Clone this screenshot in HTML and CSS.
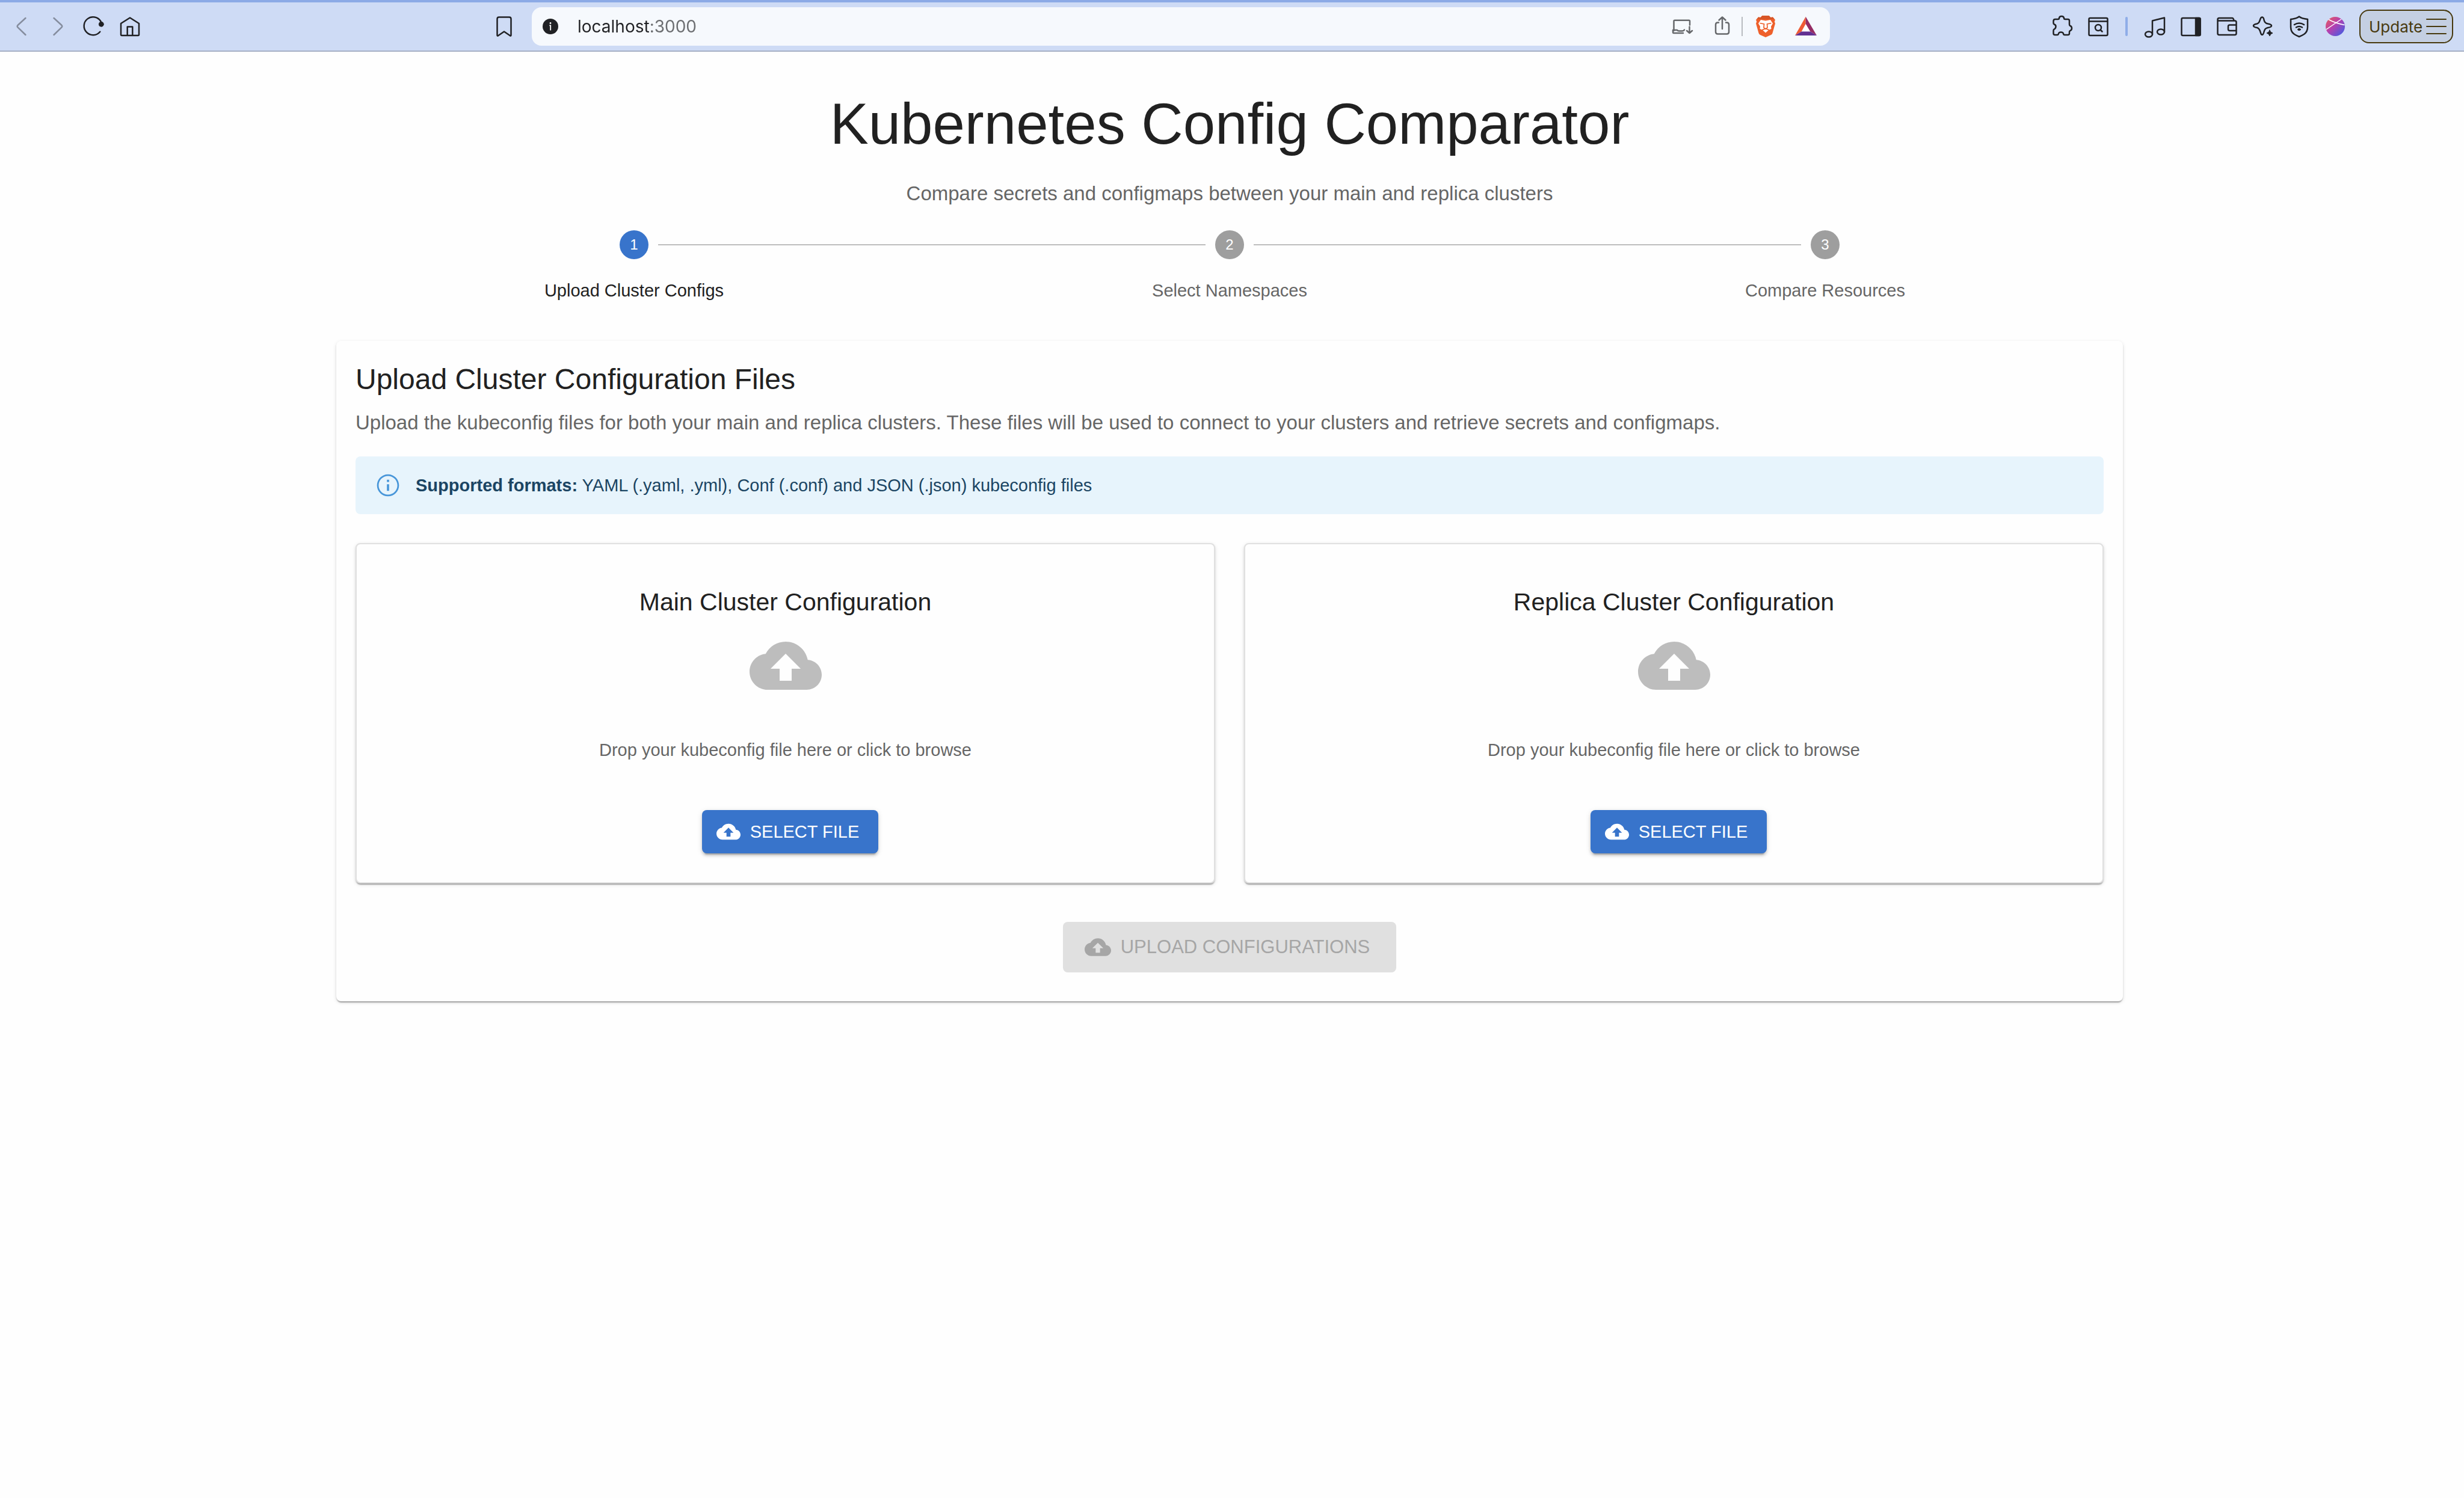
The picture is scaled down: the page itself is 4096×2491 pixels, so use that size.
FILE: index.html
```html
<!DOCTYPE html>
<html lang="en">
<head>
<meta charset="utf-8">
<title>Kubernetes Config Comparator</title>
<link rel="stylesheet" href="styles.css">
</head>
<body>
<svg class="symbols" aria-hidden="true">
  <symbol id="cloud-upload" viewBox="0 0 24 24">
    <path d="M19.35 10.04C18.67 6.59 15.64 4 12 4 9.11 4 6.6 5.64 5.35 8.04 2.34 8.36 0 10.91 0 14c0 3.31 2.69 6 6 6h13c2.76 0 5-2.24 5-5 0-2.64-2.05-4.78-4.65-4.96zM14 13v4h-4v-4H7l5-5 5 5h-3z"/>
  </symbol>
</svg>

<header class="toolbar">
  <div class="toolbar-start">
    <nav class="nav-buttons" aria-label="Browser navigation">
      <button class="icon-button muted" type="button" aria-label="Back"><svg class="line" viewBox="0 0 40 40"><path d="M26.5 6 L13.5 18 Q12 19.7 13.5 21.4 L26.5 34"/></svg></button>
      <button class="icon-button muted" type="button" aria-label="Forward"><svg class="line" viewBox="0 0 40 40"><path d="M13.5 6 L26.5 18 Q28 19.7 26.5 21.4 L13.5 34"/></svg></button>
      <button class="icon-button" type="button" aria-label="Reload"><svg class="line" viewBox="0 0 40 40"><path d="M30.3 28.7 A15 15 0 1 1 31.5 11.5 L32.5 15"/><circle class="solid thin" cx="32.3" cy="16.3" r="3.900"/></svg></button>
      <button class="icon-button" type="button" aria-label="Home"><svg class="line" viewBox="0 0 40 40"><path d="M5 15 L20 5.5 L35 15 V33.5 Q35 35 33.5 35 H6.5 Q5 35 5 33.5 Z M15.7 35 V20.5 H24.3 V35"/></svg></button>
    </nav>
    <button class="icon-button" type="button" aria-label="Bookmark"><svg class="line" viewBox="0 0 40 40"><path d="M8.500 7.500 Q8.500 4.500 11.500 4.500 H28.500 Q31.500 4.500 31.500 7.500 V34.500 Q31.500 36.500 29.500 35 L20 28.500 L10.500 35 Q8.500 36.500 8.500 34.500 Z"/></svg></button>
  </div>

  <div class="address-bar">
    <svg class="site-info" viewBox="0 0 26 26" aria-hidden="true"><circle cx="13" cy="13" r="13" fill="#202124"/><circle cx="13" cy="7.500" r="1.400" fill="#fff"/><path d="M11.300 11.300 H13.200 V19.500" stroke="#fff" stroke-width="1.800" fill="none"/></svg>
    <input class="address" type="text" aria-label="Address" value="localhost:3000">
    <div class="address-actions">
      <div class="action-group">
        <button class="icon-button grey" type="button" aria-label="Install"><svg class="line" viewBox="0 0 40 40"><path d="M6.500 27 V11 Q6.500 9.700 8 9.700 H31.500 Q33 9.700 33 11 V17.500 M22 31 H6 Q5 31 5 29 V26 H12 Q13 27.500 15 27.500 H20 Q23 27.500 24 25.500 M32.500 20.500 V31 M28 27 L32.500 31 L37 27"/></svg></button>
        <button class="icon-button grey" type="button" aria-label="Share"><svg class="line" viewBox="0 0 40 40"><path d="M14 13.500 H12.500 Q9 13.500 9 17 V29 Q9 32.500 12.500 32.500 H27.500 Q31 32.500 31 29 V17 Q31 13.500 27.500 13.500 H26 M20 24 V5 M14.500 9.500 L20 4.500 L25.500 9.500"/></svg></button>
      </div>
      <span class="thin-rule"></span>
      <div class="action-group">
        <button class="icon-button" type="button" aria-label="Shields"><svg viewBox="0 0 40 40"><path fill="#ee602b" d="M14.500 2 H25.500 L28.500 5 L32 4.500 L36 9 L34.800 12 L36 15 L31.500 31 Q31 33 29 34 L20 38 L11 34 Q9 33 8.500 31 L4 15 L5.200 12 L4 9 L8 4.500 L11.500 5 Z"/><path fill="#d75627" d="M14.500 2 H25.500 L28.500 5 L32 4.500 L34.500 7.500 L26 8.500 L20 7.500 L14 8.500 L5.500 7.500 L8 4.500 L11.500 5 Z"/><path fill="#fff" d="M12 9 L20 10.500 L28 9 L32 15 L29 20 L29.500 24 L25 26 L20 30.500 L15 26 L10.500 24 L11 20 L8 15 Z"/><path fill="none" stroke="#ee602b" stroke-width="1.700" d="M10.500 14.500 L17.500 16 L17 22 L20 24 L23 22 L22.500 16 L29.500 14.500 M14 26 L20 23.500 L26 26"/></svg></button>
        <button class="icon-button" type="button" aria-label="Rewards"><svg viewBox="0 0 40 40"><path fill="#ef5a34" d="M19.700 3.700 V16 L13 28.300 L2 35 Z"/><path fill="#952c64" d="M19.700 3.700 L38 35 L27 28.300 L19.700 16 Z"/><path fill="#623092" d="M2 35 L13 28.300 H27 L38 35 Z"/><path fill="#fff" d="M19.700 16 L27 28.300 H13 Z"/></svg></button>
      </div>
    </div>
  </div>

  <div class="toolbar-end">
    <button class="icon-button" type="button" aria-label="Extensions"><svg class="line" viewBox="0 0 40 40"><path d="M8.500 8 H13 Q15 8 15 6 Q15.500 3 19 3 Q22.500 3 23 6 Q23 8 25 8 H29.500 Q32 8 32 10.500 V16.500 Q32 18.500 33.500 19 Q36 20 36 23 Q36 26 33.500 27 Q32 27.500 32 29 V31.500 Q32 34 29.500 34 H24 Q22.300 34 22 32 Q21.500 29.500 18 29.500 Q14.500 29.500 14 32 Q13.500 34 12 34 H8 Q5.500 34 5.500 31.500 V27 Q5.500 25 7 24.500 Q9.500 23 9.500 20 Q9.500 17.500 7 16.500 Q5.500 16 5.500 14.500 V11 Q5.500 8 8.500 8 Z"/></svg></button>
    <button class="icon-button" type="button" aria-label="Search tabs"><svg class="line" viewBox="0 0 40 40"><rect x="4.500" y="6" width="31" height="29" rx="2"/><path d="M5 11.500 H35"/><circle cx="20" cy="22" r="5"/><path d="M23.500 25.500 L26.500 28.500"/></svg></button>
    <span class="thick-rule"></span>
    <button class="icon-button" type="button" aria-label="Media"><svg class="line" viewBox="0 0 40 40"><ellipse cx="10" cy="33" rx="6" ry="4.500"/><ellipse cx="30" cy="29" rx="6" ry="4.500"/><path d="M16 33 V10.500 L36 5.500 V29"/></svg></button>
    <button class="icon-button" type="button" aria-label="Side panel"><svg class="line" viewBox="0 0 40 40"><rect x="4.500" y="6" width="31" height="29" rx="2"/><path class="solid" d="M28 6 H34 Q35.500 6 35.500 8 V33 Q35.500 35 34 35 H28 Z"/></svg></button>
    <button class="icon-button" type="button" aria-label="Wallet"><svg class="line" viewBox="0 0 40 40"><path d="M4.500 11 V8.500 Q4.500 6 7 6 H28.500 Q31 6 31.500 10.500 M4.500 11 V31.500 Q4.500 34 7 34 H33 Q35.500 34 35.500 31.500 V13 Q35.500 10.500 33 10.500 H5 M35 17.500 H24.500 Q22 17.500 22 20 V24.500 Q22 27 24.500 27 H35"/></svg></button>
    <button class="icon-button" type="button" aria-label="AI assistant"><svg class="line" viewBox="0 0 40 40"><path d="M16.500 5.500 Q19.500 3 21 7 C22 12 23 14.500 28 15.500 Q34 16.500 34 18.700 Q34 21 28 22 C23.500 23 22.500 25 21 30.500 Q19.500 35.500 17 33 C15 30 15.500 23.500 10 22 Q4 21 4 18.700 Q4 16.500 10 15.500 C15 14 14 9 16.500 5.500 Z"/><path class="solid thin" d="M31 26 L32.700 29.300 L36 31 L32.700 32.700 L31 36 L29.300 32.700 L26 31 L29.300 29.300 Z"/></svg></button>
    <button class="icon-button" type="button" aria-label="VPN"><svg class="line" viewBox="0 0 40 40"><path d="M20 3.500 Q24 7 34 8 V21 Q34 29 28 33 Q24 35.500 20 37 Q16 35.500 12 33 Q6 29 6 21 V8 Q16 7 20 3.500 Z M12 17 Q20 12 28 17 M15 21.500 Q20 18.500 25 21.500"/><ellipse class="solid thin" cx="20" cy="25" rx="2.500" ry="1.500"/></svg></button>
    <button class="icon-button" type="button" aria-label="Web extension"><svg viewBox="0 0 40 40"><defs><linearGradient id="globe" x1="0" y1="0" x2="1" y2="1"><stop offset="0.100" stop-color="#e05868"/><stop offset="0.450" stop-color="#b540b0"/><stop offset="0.900" stop-color="#4a5be0"/></linearGradient></defs><circle cx="20" cy="20" r="16" fill="url(#globe)"/><path d="M9 8.500 Q20 14.500 35.500 17.500 M30 8 Q18 16 5 25" fill="none" stroke="#fff" stroke-width="1.500"/></svg></button>
    <button class="update-button" type="button"><span>Update</span><svg viewBox="0 0 34 28" aria-hidden="true"><path d="M1 2 H33 M1 14 H33 M1 26 H33" stroke="#47390e" stroke-width="2" stroke-linecap="round"/></svg></button>
  </div>
</header>

<div class="viewport">
<main class="page">
  <h1 class="title">Kubernetes Config Comparator</h1>
  <p class="subtitle">Compare secrets and configmaps between your main and replica clusters</p>

  <ol class="stepper">
    <li class="step active"><span class="badge">1</span><span class="step-label">Upload Cluster Configs</span></li>
    <li class="step"><span class="badge">2</span><span class="step-label">Select Namespaces</span></li>
    <li class="step"><span class="badge">3</span><span class="step-label">Compare Resources</span></li>
  </ol>

  <section class="panel">
    <h2 class="panel-title">Upload Cluster Configuration Files</h2>
    <p class="panel-text">Upload the kubeconfig files for both your main and replica clusters. These files will be used to connect to your clusters and retrieve secrets and configmaps.</p>

    <div class="alert">
      <svg class="alert-icon" viewBox="0 0 24 24" aria-hidden="true"><path d="M11 7h2v2h-2zm0 4h2v6h-2zm1-9C6.480 2 2 6.480 2 12s4.480 10 10 10 10-4.480 10-10S17.520 2 12 2zm0 18.500c-4.690 0-8.500-3.810-8.500-8.500S7.310 3.500 12 3.500s8.500 3.810 8.500 8.500-3.810 8.500-8.500 8.500z"/></svg>
      <p><strong>Supported formats:</strong> YAML (.yaml, .yml), Conf (.conf) and JSON (.json) kubeconfig files</p>
    </div>

    <div class="clusters">
      <article class="cluster">
        <h3 class="cluster-title">Main Cluster Configuration</h3>
        <svg class="cluster-icon" aria-hidden="true"><use href="#cloud-upload"/></svg>
        <p class="cluster-text">Drop your kubeconfig file here or click to browse</p>
        <button class="select-button" type="button"><svg aria-hidden="true"><use href="#cloud-upload"/></svg>SELECT FILE</button>
      </article>
      <article class="cluster">
        <h3 class="cluster-title">Replica Cluster Configuration</h3>
        <svg class="cluster-icon" aria-hidden="true"><use href="#cloud-upload"/></svg>
        <p class="cluster-text">Drop your kubeconfig file here or click to browse</p>
        <button class="select-button" type="button"><svg aria-hidden="true"><use href="#cloud-upload"/></svg>SELECT FILE</button>
      </article>
    </div>

    <button class="upload-button" type="button" disabled><svg aria-hidden="true"><use href="#cloud-upload"/></svg>UPLOAD CONFIGURATIONS</button>
  </section>
</main>
</div>
</body>
</html>
```

FILE: styles.css
```css
* {
  box-sizing: border-box;
}

body {
  margin: 0;
  min-height: 100vh;
  background: #fefefe;
  color: #212121;
  font-family: "Liberation Sans", Arial, sans-serif;
}

h1, h2, h3, p, ol {
  margin: 0;
  padding: 0;
  font-weight: 400;
}

button {
  margin: 0;
  padding: 0;
  border: 0;
  background: none;
  color: inherit;
  font: inherit;
}

svg {
  display: block;
}

.symbols {
  display: none;
}

/* Browser toolbar */

.toolbar {
  display: grid;
  grid-template-columns: 884fr 2158fr 1054fr;
  align-items: center;
  height: 86px;
  border-top: 4px solid #8caae6;
  border-bottom: 2px solid #a5afc5;
  background: #cedbf5;
  color: #202124;
  font-family: Inter, sans-serif;
}

.toolbar-start,
.nav-buttons,
.toolbar-end,
.address-bar,
.address-actions,
.action-group {
  display: flex;
  align-items: center;
}

.toolbar-start {
  justify-content: space-between;
  padding: 0 26px 0 16px;
}

.nav-buttons {
  gap: 20px;
}

.icon-button {
  width: 40px;
  height: 40px;
}

.icon-button svg {
  width: 40px;
  height: 40px;
}

.line {
  fill: none;
  stroke: currentColor;
  stroke-width: 2.5;
  stroke-linecap: round;
  stroke-linejoin: round;
}

.solid {
  fill: currentColor;
}

.thin {
  stroke-width: 1;
}

.muted {
  color: #858d9e;
}

.grey {
  color: #66686b;
}

.address-bar {
  height: 64px;
  padding: 0 20px 0 18px;
  border-radius: 16px;
  background: #f6f9fd;
}

.site-info {
  width: 26px;
  height: 26px;
}

.address {
  flex: 1;
  min-width: 0;
  height: 40px;
  margin-left: 32px;
  padding: 0;
  border: 0;
  background: linear-gradient(to right, #202124 121px, #6b6d70 121px);
  background-clip: text;
  color: transparent;
  font-family: Inter, sans-serif;
  font-size: 28px;
}

.address-actions {
  gap: 12px;
}

.action-group {
  gap: 27px;
}

.thin-rule {
  width: 2px;
  height: 32px;
  margin-right: 6px;
  background: #b8bbc0;
}

.toolbar-end {
  justify-content: flex-end;
  gap: 20px;
  padding-right: 18px;
}

.thick-rule {
  width: 4px;
  height: 32px;
  margin: 0 5px;
  border-radius: 2px;
  background: #8fade8;
}

.update-button {
  display: flex;
  align-items: center;
  justify-content: space-between;
  width: 156px;
  height: 56px;
  padding: 0 9px 0 14px;
  border: 2px solid #47390e;
  border-radius: 16px;
  background: #c4cfe2;
  color: #47390e;
  font-size: 26px;
}

.update-button svg {
  width: 34px;
  height: 28px;
}

.viewport {
  padding: 0 56px 0 48px;
}

.page {
  max-width: 2970px;
  margin: 0 auto;
  padding-top: 64px;
}

.title {
  font-size: 96px;
  line-height: 112px;
  text-align: center;
}

.subtitle {
  margin-top: 36px;
  color: #666;
  font-size: 33px;
  line-height: 48px;
  text-align: center;
}

.stepper {
  display: grid;
  grid-template-columns: repeat(3, 1fr);
  margin-top: 37px;
  list-style: none;
}

.step {
  display: grid;
  grid-template-columns: 1fr 48px 1fr;
  align-items: center;
  gap: 32px 16px;
}

.step::before,
.step::after {
  content: "";
  height: 2px;
  background: #bdbdbd;
}

.step::before {
  order: 0;
}

.step::after {
  order: 2;
}

.step:first-child::before,
.step:last-child::after {
  visibility: hidden;
}

.badge {
  order: 1;
  width: 48px;
  height: 48px;
  border-radius: 50%;
  background: #9e9e9e;
  color: #fff;
  font-size: 24px;
  line-height: 48px;
  text-align: center;
}

.step-label {
  order: 3;
  grid-column: 1 / -1;
  color: #666;
  font-size: 29px;
  line-height: 40px;
  text-align: center;
}

.active .badge {
  background: #3874cb;
}

.active .step-label {
  color: #212121;
}

.panel {
  margin-top: 64px;
  padding: 32px 32px 48px;
  border-radius: 8px;
  background: #fefefe;
  box-shadow: 0 4px 2px -2px rgba(0, 0, 0, 0.2), 0 2px 2px rgba(0, 0, 0, 0.14), 0 2px 6px rgba(0, 0, 0, 0.12);
}

.panel-title {
  font-size: 48px;
  line-height: 64px;
}

.panel-text {
  margin-top: 16px;
  color: #666;
  font-size: 33px;
  line-height: 48px;
}

.alert {
  display: flex;
  align-items: center;
  gap: 24px;
  min-height: 96px;
  margin-top: 32px;
  padding: 0 32px;
  border-radius: 8px;
  background: #e7f4fc;
  color: #1b4563;
  font-size: 29px;
  line-height: 40px;
}

.alert-icon {
  width: 44px;
  height: 44px;
  fill: #4896d9;
}

.clusters {
  display: grid;
  grid-template-columns: 1fr 1fr;
  gap: 48px;
  margin-top: 48px;
}

.cluster {
  display: flex;
  flex-direction: column;
  align-items: center;
  padding: 64px 32px 48px;
  border: 2px solid #e0e0e0;
  border-radius: 8px;
  background: #fefefe;
  box-shadow: 0 4px 2px -2px rgba(0, 0, 0, 0.2), 0 2px 2px rgba(0, 0, 0, 0.14), 0 2px 6px rgba(0, 0, 0, 0.12);
}

.cluster-title {
  font-size: 41px;
  line-height: 64px;
}

.cluster-icon {
  width: 120px;
  height: 120px;
  margin-top: 14px;
  fill: #bdbdbd;
}

.cluster-text {
  margin-top: 60px;
  color: #666;
  font-size: 29px;
  line-height: 40px;
}

.select-button {
  display: flex;
  align-items: center;
  gap: 16px;
  height: 72px;
  margin: 80px 0 0 16px;
  padding: 0 32px 0 24px;
  border-radius: 8px;
  background: #3874cb;
  box-shadow: 0 6px 2px -4px rgba(0, 0, 0, 0.2), 0 4px 4px rgba(0, 0, 0, 0.14), 0 2px 10px rgba(0, 0, 0, 0.12);
  color: #fff;
  font-size: 29px;
}

.select-button svg {
  width: 40px;
  height: 40px;
  fill: currentColor;
}

.upload-button {
  display: flex;
  align-items: center;
  gap: 16px;
  height: 84px;
  margin: 64px auto 0;
  padding: 0 44px 0 36px;
  border-radius: 8px;
  background: #e0e0e0;
  color: #a6a6a6;
  font-size: 31px;
}

.upload-button svg {
  width: 44px;
  height: 44px;
  fill: currentColor;
}
```
